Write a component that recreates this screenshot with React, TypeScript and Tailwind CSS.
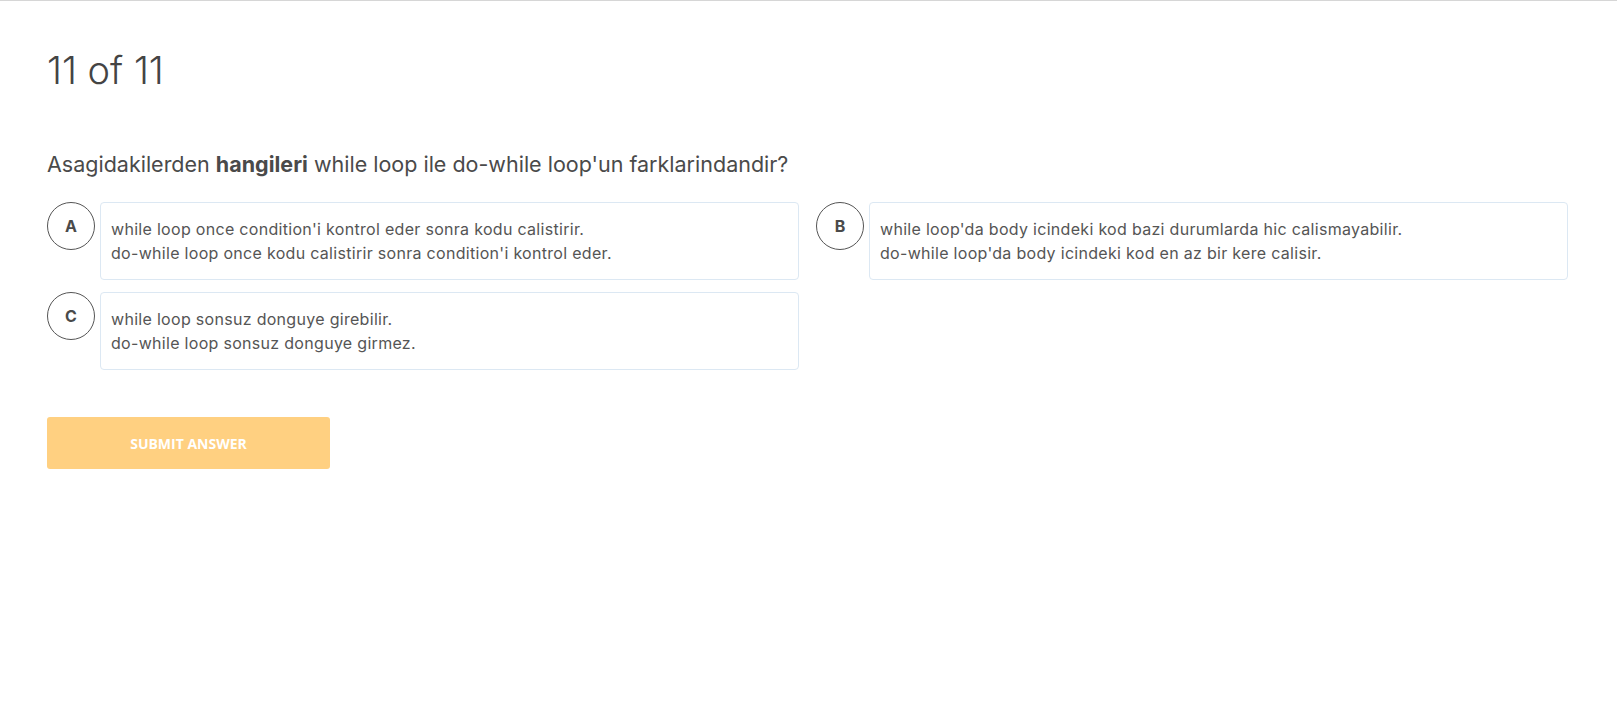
const options = [
  {
    key: 'A',
    lines: [
      "while loop once condition'i kontrol eder sonra kodu calistirir.",
      "do-while loop once kodu calistirir sonra condition'i kontrol eder.",
    ],
  },
  {
    key: 'B',
    lines: [
      "while loop'da body icindeki kod bazi durumlarda hic calismayabilir.",
      "do-while loop'da body icindeki kod en az bir kere calisir.",
    ],
  },
  {
    key: 'C',
    lines: ['while loop sonsuz donguye girebilir.', 'do-while loop sonsuz donguye girmez.'],
  },
];

function Option({ option }: { option: (typeof options)[number] }) {
  return (
    <div className="flex items-start gap-[5px]">
      <div className="w-[48px] h-[48px] shrink-0 rounded-full border border-[#555] flex items-center justify-center text-[16px] font-bold text-[#4a4a4a]">
        {option.key}
      </div>
      <div className="flex-1 border border-[#dce8f3] rounded-[4px] pl-[10px] pr-4 py-[14px] text-[16px] tracking-[0.3px] leading-[24px] text-[#555]">
        {option.lines.map((line) => (
          <div key={line}>{line}</div>
        ))}
      </div>
    </div>
  );
}

export default function App() {
  return (
    <div
      className="min-h-screen bg-white border-t border-[#d6d6d6]"
      style={{ fontFamily: 'Inter, "Noto Sans", sans-serif' }}
    >
      <div className="pl-[47px] pr-[49px] pt-[47px]">
        <h1 className="text-[38px] leading-[44px] font-light text-[#444]">11 of 11</h1>

        <p className="mt-[60px] text-[21.5px] leading-[24px] text-[#4a4a4a]">
          Asagidakilerden <span className="font-bold">hangileri</span> while loop ile do-while loop'un
          farklarindandir?
        </p>

        <div className="mt-[26px] grid grid-cols-2 gap-x-[17px] gap-y-[12px]">
          {options.map((o) => (
            <Option key={o.key} option={o} />
          ))}
        </div>

        <button
          className="mt-[47px] w-[283px] h-[52px] rounded-[3px] bg-[#ffd081] text-white text-[14px] font-bold uppercase"
          style={{ fontFamily: '"Open Sans", "Liberation Sans", sans-serif' }}
        >
          Submit Answer
        </button>
      </div>
    </div>
  );
}
